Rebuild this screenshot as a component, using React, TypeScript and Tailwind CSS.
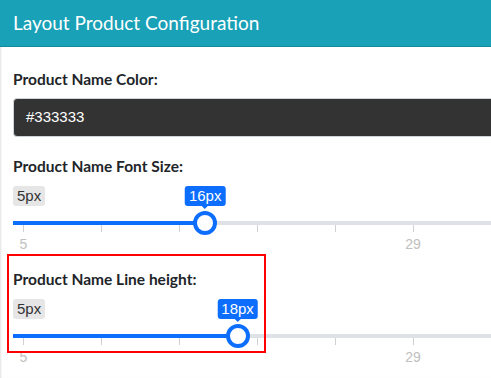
const tickCount = 7;

const SliderField = ({ label, value }: { label: string; value: number }) => {
    // handle centre in px from the track start
    const pos = 10 + (value - 5) * 16.2 + 4;
    return (
        <div>
            <div className="font-['Lato',sans-serif] font-bold text-[15.5px] leading-[20px] text-[#212529]">
                {label}
            </div>
            <div className="relative mt-[10px] w-[800px] font-['Liberation_Sans',Arial,sans-serif]">
                <div className="flex h-[20px]">
                    <span className="px-[4px] rounded-[3px] bg-[#e6e6e6] text-[15px] leading-[20px] text-[#333]">
                        5px
                    </span>
                </div>
                <div
                    className="absolute top-0 -translate-x-1/2 flex flex-col items-center"
                    style={{ left: pos }}
                >
                    <span className="h-[20px] px-[4px] rounded-[3px] bg-[#0d6efd] text-[15px] leading-[20px] text-white">
                        {value}px
                    </span>
                    <span className="w-0 h-0 border-x-[3px] border-x-transparent border-t-[3px] border-t-[#0d6efd]" />
                </div>
                <div className="mt-[15px] flex h-[4px] bg-[#dee2e6]">
                    <div className="bg-[#0d6efd]" style={{ width: pos }} />
                </div>
                <div className="flex gap-[77px] pl-[10px]">
                    {Array.from({ length: tickCount }).map((_, i) => (
                        <div key={i} className="h-[7px] w-px bg-[#d0d0d0]" />
                    ))}
                </div>
                <div className="mt-[4px] flex text-[14px] leading-[16px] text-[#c0c0c0]">
                    <span className="w-[21px] text-center">5</span>
                    <span className="ml-[358px] w-[42px] text-center">29</span>
                </div>
                <div
                    className="absolute top-[25px] -translate-x-1/2 w-[24px] h-[24px] rounded-full border-[4px] border-[#0d6efd] bg-white"
                    style={{ left: pos }}
                />
            </div>
        </div>
    );
};

export default function App() {
    return (
        <div className="relative w-[491px] h-[378px] overflow-hidden bg-white">
            <div className="h-[47px] bg-[#19a1b7] border-b border-[#138a9e] px-[13px] flex items-center">
                <h1 className="font-['Lato',sans-serif] text-[19px] text-white leading-none pb-[2px]">
                    Layout Product Configuration
                </h1>
            </div>
            <div className="h-[331px] pl-[13px] pt-[22px] shadow-[inset_2px_0_2px_-1px_rgba(0,0,0,0.12)]">
                <div className="font-['Lato',sans-serif] font-bold text-[15.5px] leading-[20px] text-[#212529]">
                    Product Name Color:
                </div>
                <div className="mt-[9px] w-[600px] h-[39px] rounded-[4px] border border-[#ced4da] bg-[#333333] pl-[12px] flex items-center font-['Liberation_Sans',Arial,sans-serif] text-[15px] text-white">
                    #333333
                </div>
                <div className="mt-[19px]">
                    <SliderField label="Product Name Font Size:" value={16} />
                </div>
                <div className="mt-[17px]">
                    <SliderField label="Product Name Line height:" value={18} />
                </div>
            </div>
            <div className="absolute left-[7px] top-[254px] w-[259px] h-[99px] border-2 border-[#ff0000]" />
        </div>
    );
}
